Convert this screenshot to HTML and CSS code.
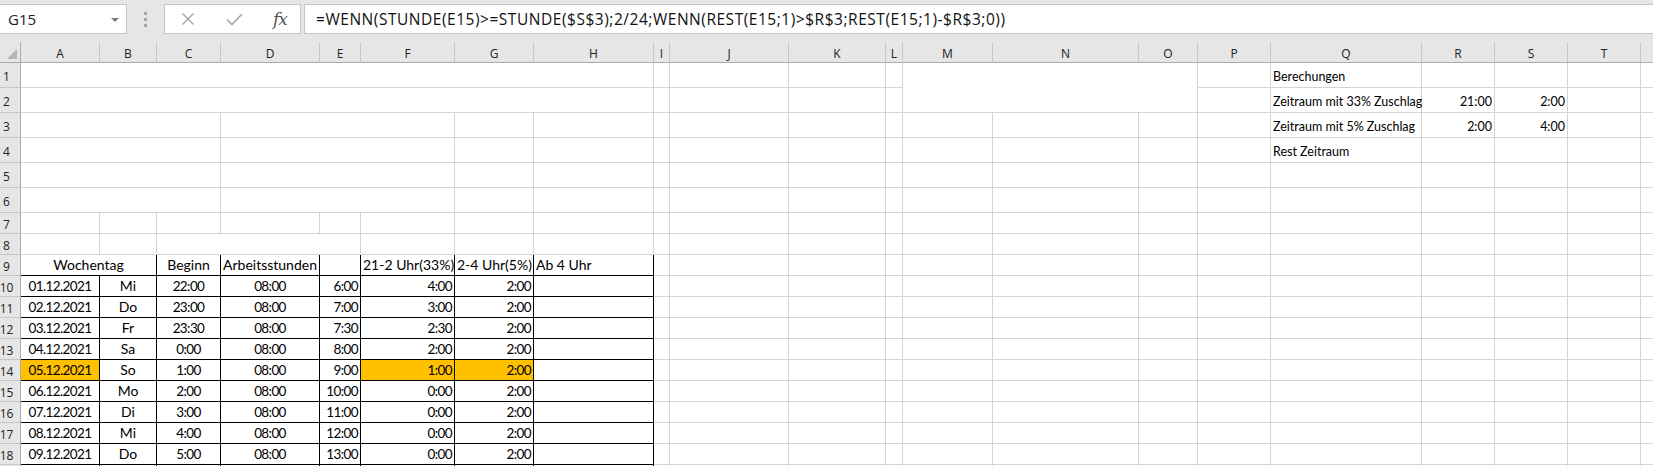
FILE: index.html
```html
<!DOCTYPE html>
<html>
    <head>
        <title>Zuschlag Berechnung - Excel</title>
        <link rel="stylesheet" href="styles.css">
    </head>
    <body>
        <div class="bar">
            <div class="namebox">
                <span>G15</span>
                <svg class="drop" width="8" height="4" viewBox="0 0 8 4"><polygon points="0,0 8,0 4,4" fill="#7a7a7a"/></svg>
            </div>
            <div class="grip"><i></i><i></i><i></i></div>
            <div class="fxbox">
                <svg class="ico-x" width="14" height="14" viewBox="0 0 14 14"><path d="M1.5 1.5 L12.5 12.5 M12.5 1.5 L1.5 12.5" stroke="#a6a6a6" stroke-width="1.4" fill="none"/></svg>
                <svg class="ico-ok" width="17" height="13" viewBox="0 0 17 13"><path d="M1 6.5 L6 11.5 L16 1" stroke="#a6a6a6" stroke-width="1.6" fill="none"/></svg>
                <span class="fx">fx</span>
            </div>
            <div class="formula">=WENN(STUNDE(E15)&gt;=STUNDE($S$3);2/24;WENN(REST(E15;1)&gt;$R$3;REST(E15;1)-$R$3;0))</div>
        </div>

        <div class="sheet">
            <!-- column headers -->
            <div class="corner"><svg width="20" height="20" viewBox="0 0 20 20"><polygon points="17,7 17,17 7,17" fill="#b4b4b4"/></svg></div>
            <div class="ch">A</div><div class="ch">B</div><div class="ch">C</div><div class="ch">D</div><div class="ch">E</div><div class="ch">F</div><div class="ch">G</div><div class="ch">H</div><div class="ch">I</div><div class="ch">J</div><div class="ch">K</div><div class="ch">L</div><div class="ch">M</div><div class="ch">N</div><div class="ch">O</div><div class="ch">P</div><div class="ch">Q</div><div class="ch">R</div><div class="ch">S</div><div class="ch">T</div><div class="ch"></div>

            <!-- row 1 -->
            <div class="rh">1</div>
            <div class="c s8"></div>
            <div class="c"></div><div class="c"></div><div class="c"></div><div class="c"></div>
            <div class="c s3 r2"></div>
            <div class="c"></div><div class="c sm">Berechungen</div><div class="c"></div><div class="c"></div><div class="c"></div><div class="c"></div>

            <!-- row 2 -->
            <div class="rh">2</div>
            <div class="c s8"></div>
            <div class="c"></div><div class="c"></div><div class="c"></div><div class="c"></div>
            <div class="c"></div><div class="c sm">Zeitraum mit 33% Zuschlag</div><div class="c sm rt">21:00</div><div class="c sm rt">2:00</div><div class="c"></div><div class="c"></div>

            <!-- row 3 -->
            <div class="rh">3</div>
            <div class="c s3"></div><div class="c s3"></div><div class="c"></div><div class="c"></div>
            <div class="c"></div><div class="c"></div><div class="c"></div><div class="c"></div><div class="c"></div><div class="c"></div><div class="c"></div>
            <div class="c"></div><div class="c sm">Zeitraum mit 5% Zuschlag</div><div class="c sm rt">2:00</div><div class="c sm rt">4:00</div><div class="c"></div><div class="c"></div>

            <!-- row 4 -->
            <div class="rh">4</div>
            <div class="c s3"></div><div class="c s3"></div><div class="c"></div><div class="c"></div>
            <div class="c"></div><div class="c"></div><div class="c"></div><div class="c"></div><div class="c"></div><div class="c"></div><div class="c"></div>
            <div class="c"></div><div class="c sm">Rest Zeitraum</div><div class="c"></div><div class="c"></div><div class="c"></div><div class="c"></div>

            <!-- row 5 -->
            <div class="rh">5</div>
            <div class="c s3"></div><div class="c s3"></div><div class="c"></div><div class="c"></div>
            <div class="c"></div><div class="c"></div><div class="c"></div><div class="c"></div><div class="c"></div><div class="c"></div><div class="c"></div>
            <div class="c"></div><div class="c"></div><div class="c"></div><div class="c"></div><div class="c"></div><div class="c"></div>

            <!-- row 6 -->
            <div class="rh">6</div>
            <div class="c s3"></div><div class="c s3"></div><div class="c"></div><div class="c"></div>
            <div class="c"></div><div class="c"></div><div class="c"></div><div class="c"></div><div class="c"></div><div class="c"></div><div class="c"></div>
            <div class="c"></div><div class="c"></div><div class="c"></div><div class="c"></div><div class="c"></div><div class="c"></div>

            <!-- row 7 -->
            <div class="rh">7</div>
            <div class="c"></div><div class="c"></div><div class="c"></div><div class="c"></div><div class="c"></div><div class="c"></div><div class="c"></div><div class="c"></div>
            <div class="c"></div><div class="c"></div><div class="c"></div><div class="c"></div><div class="c"></div><div class="c"></div><div class="c"></div>
            <div class="c"></div><div class="c"></div><div class="c"></div><div class="c"></div><div class="c"></div><div class="c"></div>

            <!-- row 8 -->
            <div class="rh">8</div>
            <div class="c"></div><div class="c"></div><div class="c s3"></div><div class="c"></div><div class="c"></div><div class="c"></div>
            <div class="c"></div><div class="c"></div><div class="c"></div><div class="c"></div><div class="c"></div><div class="c"></div><div class="c"></div>
            <div class="c"></div><div class="c"></div><div class="c"></div><div class="c"></div><div class="c"></div><div class="c"></div>

            <!-- row 9: table head -->
            <div class="rh">9</div>
            <div class="c t s2 ctr">Wochentag</div>
            <div class="c t ctr">Beginn</div>
            <div class="c t ctr">Arbeitsstunden</div>
            <div class="c t"></div>
            <div class="c t">21-2 Uhr(33%)</div>
            <div class="c t">2-4 Uhr(5%)</div>
            <div class="c t">Ab 4 Uhr</div>
            <div class="c"></div><div class="c"></div><div class="c"></div><div class="c"></div><div class="c"></div><div class="c"></div><div class="c"></div>
            <div class="c"></div><div class="c"></div><div class="c"></div><div class="c"></div><div class="c"></div><div class="c"></div>

            <!-- row 10 -->
            <div class="rh">10</div>
            <div class="c t ctr n">01.12.2021</div><div class="c t ctr">Mi</div><div class="c t ctr n">22:00</div><div class="c t ctr n">08:00</div>
            <div class="c t rt n">6:00</div><div class="c t rt n">4:00</div><div class="c t rt n">2:00</div><div class="c t"></div>
            <div class="c"></div><div class="c"></div><div class="c"></div><div class="c"></div><div class="c"></div><div class="c"></div><div class="c"></div>
            <div class="c"></div><div class="c"></div><div class="c"></div><div class="c"></div><div class="c"></div><div class="c"></div>

            <!-- row 11 -->
            <div class="rh">11</div>
            <div class="c t ctr n">02.12.2021</div><div class="c t ctr">Do</div><div class="c t ctr n">23:00</div><div class="c t ctr n">08:00</div>
            <div class="c t rt n">7:00</div><div class="c t rt n">3:00</div><div class="c t rt n">2:00</div><div class="c t"></div>
            <div class="c"></div><div class="c"></div><div class="c"></div><div class="c"></div><div class="c"></div><div class="c"></div><div class="c"></div>
            <div class="c"></div><div class="c"></div><div class="c"></div><div class="c"></div><div class="c"></div><div class="c"></div>

            <!-- row 12 -->
            <div class="rh">12</div>
            <div class="c t ctr n">03.12.2021</div><div class="c t ctr">Fr</div><div class="c t ctr n">23:30</div><div class="c t ctr n">08:00</div>
            <div class="c t rt n">7:30</div><div class="c t rt n">2:30</div><div class="c t rt n">2:00</div><div class="c t"></div>
            <div class="c"></div><div class="c"></div><div class="c"></div><div class="c"></div><div class="c"></div><div class="c"></div><div class="c"></div>
            <div class="c"></div><div class="c"></div><div class="c"></div><div class="c"></div><div class="c"></div><div class="c"></div>

            <!-- row 13 -->
            <div class="rh">13</div>
            <div class="c t ctr n">04.12.2021</div><div class="c t ctr">Sa</div><div class="c t ctr n">0:00</div><div class="c t ctr n">08:00</div>
            <div class="c t rt n">8:00</div><div class="c t rt n">2:00</div><div class="c t rt n">2:00</div><div class="c t"></div>
            <div class="c"></div><div class="c"></div><div class="c"></div><div class="c"></div><div class="c"></div><div class="c"></div><div class="c"></div>
            <div class="c"></div><div class="c"></div><div class="c"></div><div class="c"></div><div class="c"></div><div class="c"></div>

            <!-- row 14 -->
            <div class="rh">14</div>
            <div class="c t ctr n hl">05.12.2021</div><div class="c t ctr">So</div><div class="c t ctr n">1:00</div><div class="c t ctr n">08:00</div>
            <div class="c t rt n">9:00</div><div class="c t rt n hl">1:00</div><div class="c t rt n hl">2:00</div><div class="c t"></div>
            <div class="c"></div><div class="c"></div><div class="c"></div><div class="c"></div><div class="c"></div><div class="c"></div><div class="c"></div>
            <div class="c"></div><div class="c"></div><div class="c"></div><div class="c"></div><div class="c"></div><div class="c"></div>

            <!-- row 15 -->
            <div class="rh">15</div>
            <div class="c t ctr n">06.12.2021</div><div class="c t ctr">Mo</div><div class="c t ctr n">2:00</div><div class="c t ctr n">08:00</div>
            <div class="c t rt n">10:00</div><div class="c t rt n">0:00</div><div class="c t rt n">2:00</div><div class="c t"></div>
            <div class="c"></div><div class="c"></div><div class="c"></div><div class="c"></div><div class="c"></div><div class="c"></div><div class="c"></div>
            <div class="c"></div><div class="c"></div><div class="c"></div><div class="c"></div><div class="c"></div><div class="c"></div>

            <!-- row 16 -->
            <div class="rh">16</div>
            <div class="c t ctr n">07.12.2021</div><div class="c t ctr">Di</div><div class="c t ctr n">3:00</div><div class="c t ctr n">08:00</div>
            <div class="c t rt n">11:00</div><div class="c t rt n">0:00</div><div class="c t rt n">2:00</div><div class="c t"></div>
            <div class="c"></div><div class="c"></div><div class="c"></div><div class="c"></div><div class="c"></div><div class="c"></div><div class="c"></div>
            <div class="c"></div><div class="c"></div><div class="c"></div><div class="c"></div><div class="c"></div><div class="c"></div>

            <!-- row 17 -->
            <div class="rh">17</div>
            <div class="c t ctr n">08.12.2021</div><div class="c t ctr">Mi</div><div class="c t ctr n">4:00</div><div class="c t ctr n">08:00</div>
            <div class="c t rt n">12:00</div><div class="c t rt n">0:00</div><div class="c t rt n">2:00</div><div class="c t"></div>
            <div class="c"></div><div class="c"></div><div class="c"></div><div class="c"></div><div class="c"></div><div class="c"></div><div class="c"></div>
            <div class="c"></div><div class="c"></div><div class="c"></div><div class="c"></div><div class="c"></div><div class="c"></div>

            <!-- row 18 -->
            <div class="rh">18</div>
            <div class="c t ctr n">09.12.2021</div><div class="c t ctr">Do</div><div class="c t ctr n">5:00</div><div class="c t ctr n">08:00</div>
            <div class="c t rt n">13:00</div><div class="c t rt n">0:00</div><div class="c t rt n">2:00</div><div class="c t"></div>
            <div class="c"></div><div class="c"></div><div class="c"></div><div class="c"></div><div class="c"></div><div class="c"></div><div class="c"></div>
            <div class="c"></div><div class="c"></div><div class="c"></div><div class="c"></div><div class="c"></div><div class="c"></div>

            <!-- row 19 (cut off at the bottom edge) -->
            <div class="rh"></div>
            <div class="c t"></div><div class="c t"></div><div class="c t"></div><div class="c t"></div>
            <div class="c t"></div><div class="c t"></div><div class="c t"></div><div class="c t"></div>
            <div class="c"></div><div class="c"></div><div class="c"></div><div class="c"></div><div class="c"></div><div class="c"></div><div class="c"></div>
            <div class="c"></div><div class="c"></div><div class="c"></div><div class="c"></div><div class="c"></div><div class="c"></div>
        </div>
    </body>
</html>
```

FILE: styles.css
```css
html, body {
    margin: 0;
    overflow: hidden;
}
body {
    font-family: Lato, "Liberation Sans", sans-serif;
    background-color: #fff;
    color: #000;
}

/* formula bar */
.bar {
    display: flex;
    align-items: flex-start;
    height: 42px;
    padding-top: 4px;
    box-sizing: border-box;
    background-color: #e6e6e6;
    font-family: "Open Sans", "Noto Sans", sans-serif;
}
.namebox {
    width: 127px;
    height: 30px;
    box-sizing: border-box;
    display: flex;
    align-items: center;
    justify-content: space-between;
    padding: 0 7px 0 8px;
    background-color: #fff;
    border: 1px solid #c6c6c6;
    border-left: none;
    font-size: 15px;
    color: #222;
}
.drop {
    margin-top: 1px;
}
.grip {
    width: 37px;
    height: 30px;
    display: flex;
    flex-direction: column;
    align-items: center;
    justify-content: center;
    gap: 3px;
}
.grip i {
    display: block;
    width: 3px;
    height: 3px;
    background-color: #a8a8a8;
}
.fxbox {
    width: 137px;
    height: 30px;
    box-sizing: border-box;
    display: flex;
    align-items: center;
    background-color: #fff;
    border: 1px solid #c6c6c6;
}
.ico-x {
    margin-left: 16px;
}
.ico-ok {
    margin-left: 31px;
}
.fx {
    margin-left: 30px;
    font-family: "DejaVu Serif", "Liberation Serif", serif;
    font-style: italic;
    font-size: 17px;
    color: #555;
    letter-spacing: -1px;
}
.formula {
    flex: 1;
    height: 30px;
    box-sizing: border-box;
    margin-left: 3px;
    padding-left: 11px;
    display: flex;
    align-items: center;
    background-color: #fff;
    border: 1px solid #c6c6c6;
    border-right: none;
    font-size: 15.5px;
    letter-spacing: 0.53px;
    color: #111;
    white-space: nowrap;
}

/* sheet grid */
.sheet {
    display: grid;
    grid-template-columns: 21px 79px 57px 64px 99px 41px 94px 79px 120px 16px 119px 97px 17px 90px 146px 59px 73px 151px 73px 73px 73px 60px;
    grid-template-rows: 21px repeat(6, 25px) repeat(13, 21px);
    font-size: 14px;
}
.corner, .ch, .rh {
    background-color: #e6e6e6;
    font-family: "Open Sans", "Noto Sans", sans-serif;
    font-size: 12px;
    color: #222;
    box-sizing: border-box;
}
.corner {
    border-right: 1px solid #ababab;
    border-bottom: 1px solid #ababab;
}
.corner svg {
    display: block;
}
.ch {
    display: flex;
    align-items: center;
    justify-content: center;
    border-right: 1px solid #c6c6c6;
    border-bottom: 1px solid #ababab;
    padding-top: 2px;
}
.rh {
    display: flex;
    align-items: center;
    padding: 2px 7px 0 0;
    justify-content: center;
    border-right: 1px solid #ababab;
    border-bottom: 1px solid #c6c6c6;
}
.c {
    box-sizing: border-box;
    display: flex;
    align-items: flex-end;
    padding: 0 2px 1px 2px;
    line-height: 18px;
    white-space: nowrap;
    border-right: 1px solid #d4d4d4;
    border-bottom: 1px solid #d4d4d4;
}
.sm {
    font-size: 12.5px;
    padding-bottom: 1px;
}
.n {
    font-size: 13.5px;
    letter-spacing: -0.6px;
}
.t {
    border-right-color: #000;
    border-bottom-color: #000;
}
.ctr {
    justify-content: center;
}
.rt {
    justify-content: flex-end;
}
.hl {
    background-color: #ffc000;
}
.s2 {
    grid-column: span 2;
}
.s3 {
    grid-column: span 3;
}
.s8 {
    grid-column: span 8;
}
.r2 {
    grid-row: span 2;
}
```
